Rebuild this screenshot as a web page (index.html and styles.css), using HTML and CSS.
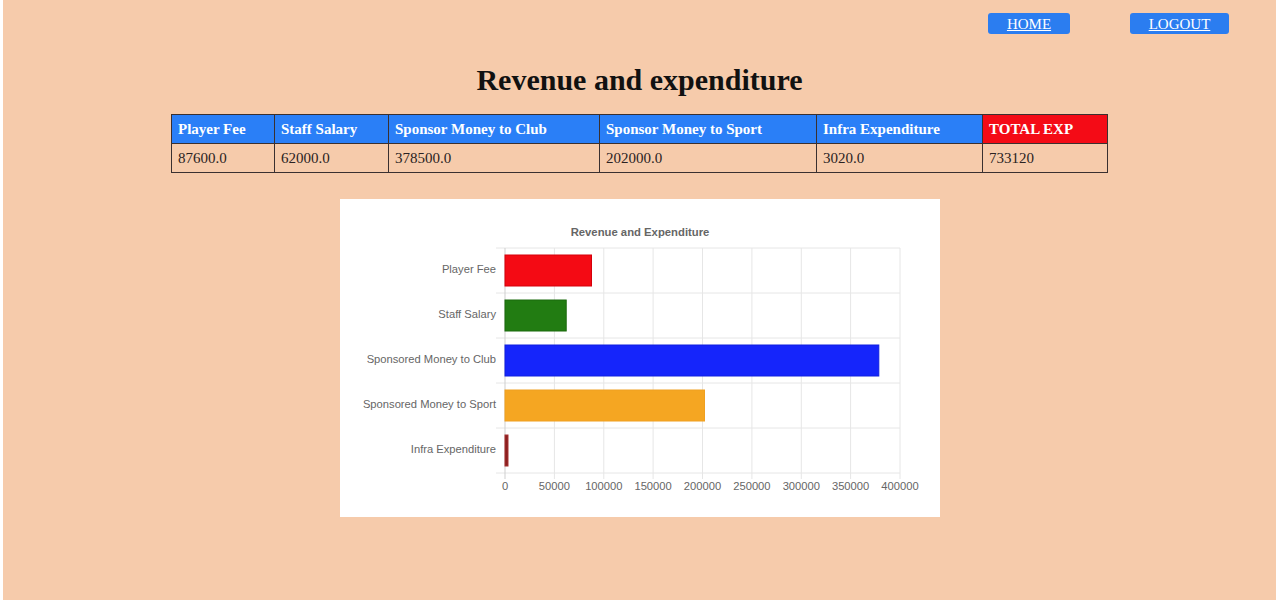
FILE: index.html
```html
<!DOCTYPE html>
<html>
<head>
<meta charset="utf-8">
<title>Revenue and expenditure</title>
<link rel="stylesheet" href="styles.css">
</head>
<body>
<div class="page">
  <nav class="nav">
    <a class="btn btn-home" href="#">HOME</a>
    <a class="btn btn-logout" href="#">LOGOUT</a>
  </nav>
  <h1 class="title">Revenue and expenditure</h1>
  <table class="data">
    <colgroup>
      <col style="width:103px"><col style="width:114px"><col style="width:211px"><col style="width:217px"><col style="width:166px"><col style="width:125px">
    </colgroup>
    <thead>
      <tr>
        <th>Player Fee</th>
        <th>Staff Salary</th>
        <th>Sponsor Money to Club</th>
        <th>Sponsor Money to Sport</th>
        <th>Infra Expenditure</th>
        <th class="total">TOTAL EXP</th>
      </tr>
    </thead>
    <tbody>
      <tr>
        <td>87600.0</td>
        <td>62000.0</td>
        <td>378500.0</td>
        <td>202000.0</td>
        <td>3020.0</td>
        <td>733120</td>
      </tr>
    </tbody>
  </table>
  <div class="chart-card">
    <svg class="chart" width="600" height="318" viewBox="0 0 600 318">
      <text class="chart-title" x="300" y="37" text-anchor="middle">Revenue and Expenditure</text>
      <g class="grid">
        <line x1="156" y1="49" x2="560" y2="49"/>
        <line x1="156" y1="94" x2="560" y2="94"/>
        <line x1="156" y1="139" x2="560" y2="139"/>
        <line x1="156" y1="184" x2="560" y2="184"/>
        <line x1="156" y1="229" x2="560" y2="229"/>
        <line x1="156" y1="274" x2="560" y2="274"/>
        <line x1="214.4" y1="49" x2="214.4" y2="280"/>
        <line x1="263.8" y1="49" x2="263.8" y2="280"/>
        <line x1="313.1" y1="49" x2="313.1" y2="280"/>
        <line x1="362.5" y1="49" x2="362.5" y2="280"/>
        <line x1="411.9" y1="49" x2="411.9" y2="280"/>
        <line x1="461.3" y1="49" x2="461.3" y2="280"/>
        <line x1="510.6" y1="49" x2="510.6" y2="280"/>
        <line x1="560" y1="49" x2="560" y2="280"/>
      </g>
      <line class="axis" x1="165" y1="49" x2="165" y2="280"/>
      <g class="bars">
        <rect x="165" y="56" width="86.5" height="31" fill="#f40a14" stroke="#d5000a"/>
        <rect x="165" y="101" width="61.2" height="31" fill="#227c12" stroke="#1b6a0c"/>
        <rect x="165" y="146" width="373.8" height="31" fill="#1525fb" stroke="#1020e0"/>
        <rect x="165" y="191" width="199.5" height="31" fill="#f5a622" stroke="#f0a020"/>
        <rect x="165" y="236" width="3" height="31" fill="#8a1f1f" stroke="#a53030"/>
      </g>
      <g class="ylabels" text-anchor="end">
        <text x="156" y="74">Player Fee</text>
        <text x="156" y="119">Staff Salary</text>
        <text x="156" y="164">Sponsored Money to Club</text>
        <text x="156" y="209">Sponsored Money to Sport</text>
        <text x="156" y="254">Infra Expenditure</text>
      </g>
      <g class="xlabels" text-anchor="middle">
        <text x="165" y="291">0</text>
        <text x="214.4" y="291">50000</text>
        <text x="263.8" y="291">100000</text>
        <text x="313.1" y="291">150000</text>
        <text x="362.5" y="291">200000</text>
        <text x="411.9" y="291">250000</text>
        <text x="461.3" y="291">300000</text>
        <text x="510.6" y="291">350000</text>
        <text x="560" y="291">400000</text>
      </g>
    </svg>
  </div>
</div>
</body>
</html>
```
FILE: styles.css
```css
html, body {
  margin: 0;
  padding: 0;
  background: #ffffff;
}

.page {
  margin: 0 4px 0 3px;
  min-height: 600px;
  background: #f6cbab;
  font-family: "Liberation Serif", "Times New Roman", serif;
  display: flex;
  flex-direction: column;
  align-items: center;
  box-sizing: border-box;
  overflow: hidden;
}

.nav {
  align-self: stretch;
  display: flex;
  justify-content: flex-end;
  gap: 60px;
  padding: 13px 47px 0 0;
}

.btn {
  display: flex;
  align-items: center;
  justify-content: center;
  height: 21px;
  padding-top: 1px;
  box-sizing: border-box;
  background: #2b7df0;
  border-radius: 3px;
  color: #ffffff;
  font-size: 15px;
  text-decoration: underline;
}

.btn-home {
  width: 82px;
}

.btn-logout {
  width: 99px;
}

.title {
  margin: 29px 0 0 0;
  font-size: 30px;
  line-height: 34px;
  font-weight: bold;
  color: #111111;
}

.data {
  margin-top: 17px;
  width: 936px;
  table-layout: fixed;
  border-collapse: collapse;
  font-size: 15px;
}

.data th,
.data td {
  border: 1px solid #3a3030;
  height: 29px;
  padding: 0 6px;
  text-align: left;
  box-sizing: border-box;
  white-space: nowrap;
}

.data th {
  background: #2a7ff7;
  color: #ffffff;
  font-weight: bold;
}

.data th.total {
  background: #f40b16;
}

.data td {
  color: #2a2222;
}

.chart-card {
  margin-top: 26px;
  width: 600px;
  height: 318px;
  background: #ffffff;
}

.chart {
  display: block;
  font-family: "Liberation Sans", Arial, sans-serif;
}

.chart-title {
  font-size: 11.3px;
  font-weight: bold;
  fill: #666666;
}

.grid line {
  stroke: #e6e6e6;
  stroke-width: 1;
}

.axis {
  stroke: #cfcfcf;
  stroke-width: 1;
}

.ylabels text,
.xlabels text {
  font-size: 11.2px;
  fill: #666666;
}
```
